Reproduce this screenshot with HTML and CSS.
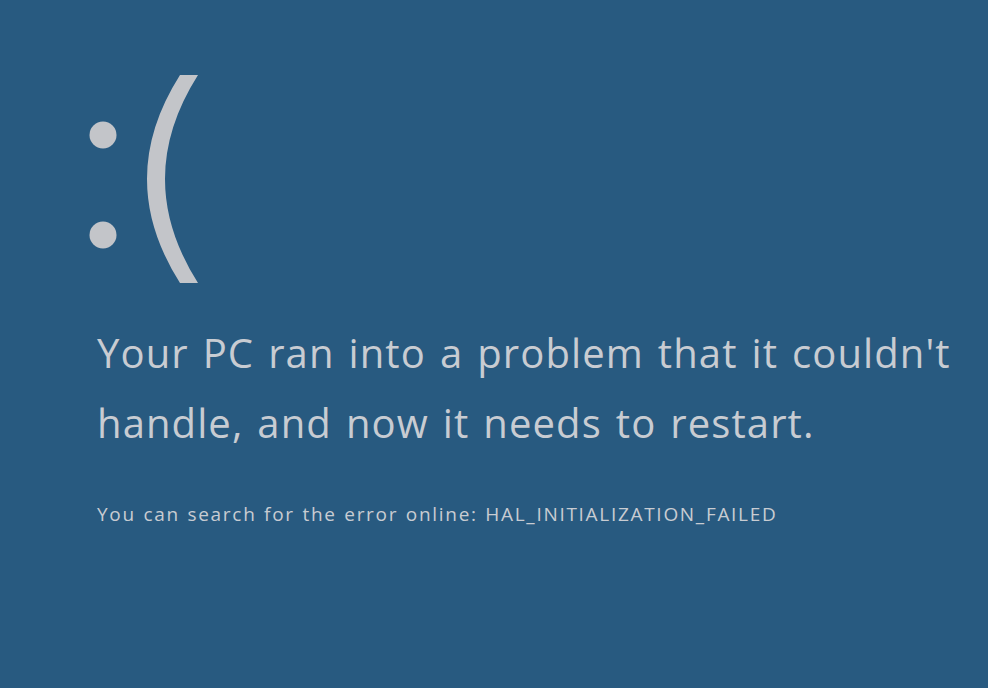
FILE: index.html
```html
<!DOCTYPE html>
<html lang="en">
<head>
<meta charset="utf-8">
<title>Your PC ran into a problem</title>
<link rel="stylesheet" href="styles.css">
</head>
<body>
<main class="screen">
  <svg class="face" width="140" height="230" viewBox="80 70 140 230" aria-label=":(">
    <circle cx="103" cy="135" r="13.5" fill="#c3c5c9"/>
    <circle cx="103" cy="235" r="13.5" fill="#c3c5c9"/>
    <path d="M180,75 L198,75 Q132,179 198,283 L180,283 Q114,179 180,75 Z" fill="#c3c5c9"/>
  </svg>
  <h1 class="headline">Your PC ran into a problem that it couldn't<br>handle, and now it needs to restart.</h1>
  <p class="detail">You can search for the error online: HAL_INITIALIZATION_FAILED</p>
</main>
</body>
</html>
```

FILE: styles.css
```css
html, body {
  margin: 0;
  padding: 0;
  background: #285a80;
}
.screen {
  width: 988px;
  height: 688px;
  box-sizing: border-box;
  padding: 70px 0 0 80px;
  font-family: "Open Sans", "Noto Sans", sans-serif;
  color: #c8ccd2;
  overflow: hidden;
}
.face {
  display: block;
}
.headline {
  margin: 18px 0 0 17px;
  white-space: nowrap;
  font-size: 40px;
  font-weight: 400;
  line-height: 70px;
  letter-spacing: 1.1px;
  word-spacing: 2.5px;
}
.detail {
  margin: 44px 0 0 17px;
  font-size: 19px;
  line-height: 24px;
  letter-spacing: 1.7px;
  word-spacing: 1px;
}
```
